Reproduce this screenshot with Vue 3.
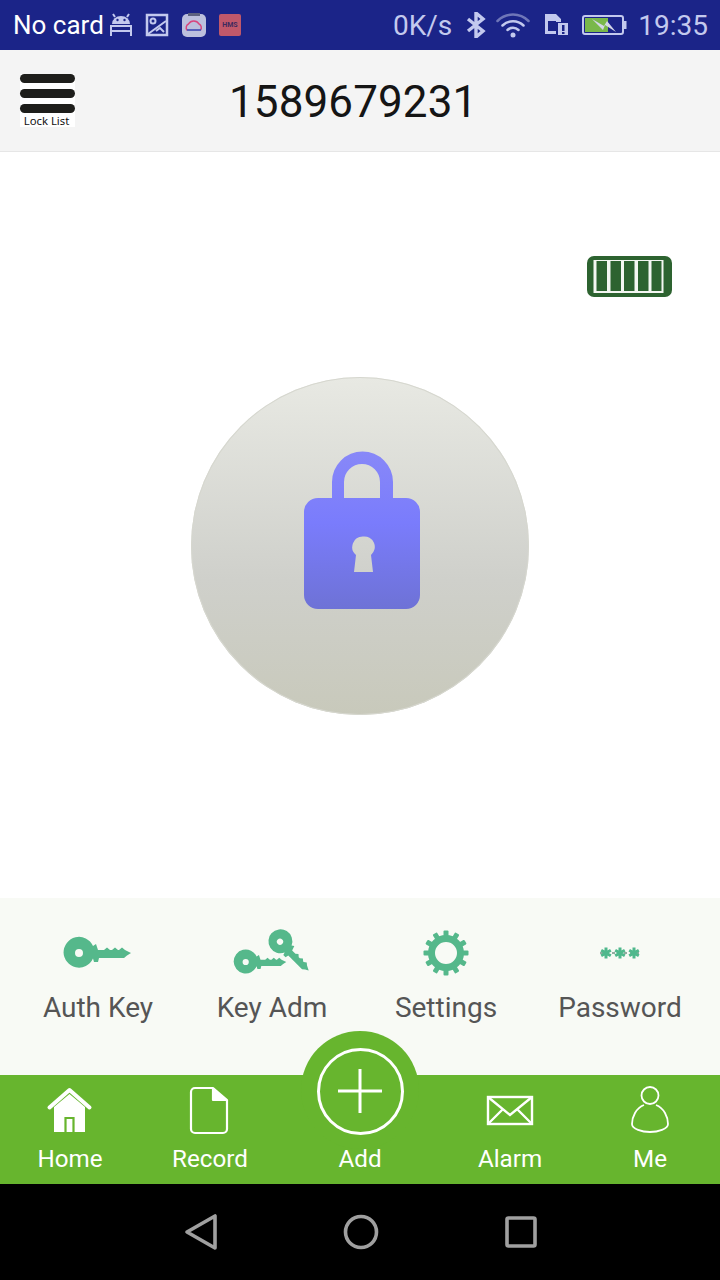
<script setup>
// key shape, head centred on 0,0 with the blade pointing right
const keyPath = 'M-15.5 0a15.5 16 0 0 1 29.500-7l3-2 2 6h6l3-2.500 3 2.500h2l3-2.500 3 2.500h1l3-2.500 3 2.500 6 3-4 2.500-3 2.500H20l-1 4h-4l-1-3.500a15.500 16 0 0 1-29.500-6.500zM-4 0a4 4 0 1 0 8 0a4 4 0 1 0-8 0z'

const gearTeeth = Array.from({ length: 12 }, (_, i) => i * 30)

const actions = ['Auth Key', 'Key Adm', 'Settings', 'Password']
</script>

<template>
  <div class="phone">
    <!-- status bar -->
    <div class="status">
      <div class="status-left">
        <span class="carrier">No card</span>
        <svg class="s-android" width="26" height="26" viewBox="0 0 26 26" fill="none" stroke="#c3c9ee" stroke-width="2">
          <path d="M4 12a9 8 0 0 1 18 0z" fill="#c3c9ee" stroke="none" />
          <circle cx="9.500" cy="8" r="1.200" fill="#1b2488" stroke="none" />
          <circle cx="16.500" cy="8" r="1.200" fill="#1b2488" stroke="none" />
          <path d="M7 5 5 2M19 5l2-3M2 14h22M3 14v10M23 14v10M3 19h20" />
        </svg>
        <svg class="s-image" width="24" height="24" viewBox="0 0 24 24" fill="none" stroke="#c3c9ee" stroke-width="2.500">
          <rect x="2" y="2" width="20" height="20" />
          <circle cx="8" cy="8" r="2.500" stroke-width="2" />
          <path d="M3 21 21 8M11 18l4-3 4 4" stroke-width="2" />
        </svg>
        <svg class="s-cloud" width="24" height="24" viewBox="0 0 24 24" fill="none">
          <rect y="1" width="24" height="23" rx="5" fill="#bcc0dd" />
          <path d="M6 0h12v3H6z" fill="#5d6280" />
          <path d="M5 17a4 4 0 0 1 1.500-6 6 6 0 0 1 10.500 0 4 4 0 0 1 1.500 6z" stroke="#d8457e" stroke-width="1.500" />
          <path d="M5 17h14" stroke="#2e5fc8" stroke-width="1.500" />
        </svg>
        <div class="s-hms">HMS</div>
      </div>
      <div class="status-right">
        <span class="speed">0K/s</span>
        <svg width="20" height="26" viewBox="0 0 20 26" fill="none" stroke="#c3c9ee" stroke-width="3.400">
          <path d="M2 7 17 19l-7 6V1l7 6L2 19" />
        </svg>
        <svg width="34" height="26" viewBox="0 0 34 26" fill="none" stroke-linecap="round">
          <path d="M1.500 9a22 22 0 0 1 31 0" stroke="#6f76b8" stroke-width="2.500" />
          <path d="M6.500 13.500a15 15 0 0 1 21 0" stroke="#c3c9ee" stroke-width="2.500" />
          <path d="M11.500 18a8 8 0 0 1 11 0" stroke="#c3c9ee" stroke-width="2.500" />
          <circle cx="17" cy="23" r="2.500" fill="#c3c9ee" />
        </svg>
        <svg class="s-sim" width="26" height="26" viewBox="0 0 26 26">
          <path d="M1 2h11l5 5v3h-5v12H1z" fill="#c3c9ee" />
          <path d="M4 9h8v10H4z" fill="#1b2488" />
          <path d="M14 11h10v12H14z" fill="#c3c9ee" />
          <path d="M18 13h2.500v6H18zM18 20h2.500v2H18z" fill="#1b2488" />
        </svg>
        <svg width="46" height="24" viewBox="0 0 46 24">
          <rect x="2" y="3" width="40" height="18" rx="2" fill="none" stroke="#c3c9ee" stroke-width="2" />
          <rect x="43" y="8" width="2.500" height="8" fill="#c3c9ee" />
          <rect x="4" y="5" width="23" height="14" fill="#79b84a" />
          <path d="M11 6 23 13l3-5 9 11-11-7-2 5z" fill="#d3d6e8" />
        </svg>
        <span class="clock">19:35</span>
      </div>
    </div>

    <!-- title bar -->
    <header class="topbar">
      <div class="lock-list">
        <i></i><i></i><i></i>
        <span>Lock List</span>
      </div>
      <h1>1589679231</h1>
    </header>

    <main class="main">
      <svg class="battery" width="85" height="41" viewBox="0 0 85 41">
        <rect width="85" height="41" rx="7" fill="#2d6330" />
        <rect x="6.500" y="4" width="70" height="33" fill="#f4f7f2" />
        <rect x="9.500" y="5" width="10.500" height="30" fill="#2d6330" />
        <rect x="23.500" y="5" width="10.500" height="30" fill="#2d6330" />
        <rect x="37" y="5" width="10.500" height="30" fill="#2d6330" />
        <rect x="51" y="5" width="10.500" height="30" fill="#2d6330" />
        <rect x="64.500" y="5" width="10" height="30" fill="#2d6330" />
      </svg>

      <button class="lock-btn">
        <svg width="338" height="338" viewBox="0 0 338 338">
          <defs>
            <linearGradient id="lockFill" x1="0" y1="0" x2="0" y2="1">
              <stop offset="0" stop-color="#8888f8" />
              <stop offset="0.45" stop-color="#7a7cfc" />
              <stop offset="1" stop-color="#6e72d6" />
            </linearGradient>
          </defs>
          <path
            fill="url(#lockFill)"
            fill-rule="evenodd"
            d="M141 121V105a30.500 30.500 0 0 1 61 0v16h13a14 14 0 0 1 14 14v83a14 14 0 0 1-14 14H127a14 14 0 0 1-14-14V135a14 14 0 0 1 14-14zM153 121h36V105a18 18 0 0 0-36 0zM172 159.500a10.500 10.500 0 0 0-7 18.500l-2 17h19l-2-17a10.500 10.500 0 0 0-8-18.500z"
          />
        </svg>
      </button>
    </main>

    <!-- quick actions -->
    <section class="actions">
      <div v-for="(name, index) in actions" :key="name" class="action">
        <svg width="110" height="56" viewBox="0 0 110 56" class="action-icon">
          <g v-if="index === 0" fill="#55b88b">
            <path :d="keyPath" fill-rule="evenodd" transform="translate(36 28)" />
          </g>
          <g v-else-if="index === 1" fill="#55b88b">
            <path :d="keyPath" fill-rule="evenodd" transform="translate(28.700 37) scale(.78)" />
            <path :d="keyPath" fill-rule="evenodd" transform="translate(63 16.700) rotate(45) scale(.78)" />
          </g>
          <g v-else-if="index === 2" fill="#55b88b">
            <circle cx="55" cy="28" r="14.500" fill="none" stroke="#55b88b" stroke-width="7" />
            <rect
              v-for="deg in gearTeeth"
              :key="deg"
              x="52.500"
              y="5.500"
              width="5"
              height="6"
              rx="1"
              :transform="`rotate(${deg} 55 28)`"
            />
          </g>
          <g v-else fill="none">
            <path d="M35 28h40" stroke="#2e5d4c" stroke-width="1" stroke-dasharray="3 3" />
            <g stroke="#4fb88c" stroke-width="3">
              <path d="M41 22.500v11M36.200 25.200l9.600 5.600M45.800 25.200l-9.600 5.600" />
              <path d="M55 22.500v11M50.200 25.200l9.600 5.600M59.800 25.200l-9.600 5.600" />
              <path d="M69 22.500v11M64.200 25.200l9.600 5.600M73.800 25.200l-9.600 5.600" />
            </g>
          </g>
        </svg>
        <span>{{ name }}</span>
      </div>
    </section>

    <!-- bottom tabs -->
    <nav class="tabs">
      <div class="tab">
        <svg width="50" height="50" viewBox="0 0 50 50">
          <path d="M4.500 22.500 24.500 5l20 17.500" fill="none" stroke="#fff" stroke-width="4" stroke-linejoin="round" stroke-linecap="round" />
          <path d="M9 22 24.500 9 40 22v25H9z" fill="#fff" />
          <path d="M20.500 47V33h8v14" fill="#fff" stroke="#67b52e" stroke-width="2.200" />
        </svg>
        <span>Home</span>
      </div>
      <div class="tab">
        <svg width="50" height="50" viewBox="0 0 50 50" fill="none" stroke="#fff" stroke-width="2.200">
          <path d="M28 3H10a4 4 0 0 0-4 4v37a4 4 0 0 0 4 4h28a4 4 0 0 0 4-4V15" />
          <path d="M28 3 42 15H28z" fill="#fff" stroke-linejoin="round" />
        </svg>
        <span>Record</span>
      </div>
      <div class="tab tab-add">
        <div class="hump">
          <div class="ring">
            <svg width="46" height="46" viewBox="0 0 46 46" stroke="#fff" stroke-width="3">
              <path d="M1 23h44M23 1v44" />
            </svg>
          </div>
        </div>
        <span>Add</span>
      </div>
      <div class="tab">
        <svg width="50" height="50" viewBox="0 0 50 50" fill="none" stroke="#fff" stroke-width="2.400">
          <rect x="3" y="12" width="44" height="27" />
          <path d="M3 12 25 30l22-18M3 39l15-15M47 39 32 24" />
        </svg>
        <span>Alarm</span>
      </div>
      <div class="tab">
        <svg width="50" height="50" viewBox="0 0 50 50" fill="none" stroke="#fff" stroke-width="1.800">
          <circle cx="25" cy="10.500" r="8.500" />
          <path d="M19 20C11 23 7 32 7 39c0 5 10 8 18 8s18-3 18-8c0-7-4-16-12-19" />
        </svg>
        <span>Me</span>
      </div>
    </nav>

    <!-- android nav keys -->
    <div class="keys">
      <svg width="160" height="44" viewBox="0 0 160 44" fill="none" stroke="#a0a0a0" stroke-width="3.600" stroke-linejoin="round">
        <path d="M95 6v32L67 22z" />
      </svg>
      <svg width="160" height="44" viewBox="0 0 160 44" fill="none" stroke="#a0a0a0" stroke-width="3.600">
        <circle cx="81" cy="22" r="15.500" />
      </svg>
      <svg width="160" height="44" viewBox="0 0 160 44" fill="none" stroke="#a0a0a0" stroke-width="3.600" stroke-linejoin="round">
        <rect x="67" y="8" width="28" height="28" rx="1.500" />
      </svg>
    </div>
  </div>
</template>

<style scoped>
.phone {
  width: 720px;
  height: 1280px;
  display: flex;
  flex-direction: column;
  font-family: Roboto, "Liberation Sans", sans-serif;
  overflow: hidden;
}

.status {
  height: 50px;
  flex: none;
  background: #1b2488;
  display: flex;
  justify-content: space-between;
  align-items: center;
  padding: 0 12px 0 13px;
  box-sizing: border-box;
  font-size: 26px;
}

.status-left,
.status-right {
  display: flex;
  align-items: center;
}

.carrier {
  color: #fff;
  width: 95px;
}

.s-android {
  margin-right: 11px;
}

.s-image {
  margin-right: 13px;
}

.s-cloud {
  margin-right: 13px;
}

.s-hms {
  width: 22px;
  height: 22px;
  border-radius: 2px;
  background: #c0586a;
  color: #3d2a5e;
  font-size: 7px;
  font-weight: 700;
  line-height: 22px;
  text-align: center;
}

.status-right {
  gap: 10px;
  color: #c3c9ee;
  font-size: 28px;
}

.speed {
  margin-right: 4px;
}

.s-sim {
  margin: 0 1px 0 4px;
}

.clock {
  margin-left: 1px;
}

.topbar {
  height: 102px;
  flex: none;
  background: #f4f4f4;
  border-bottom: 1px solid #e6e6e6;
  box-sizing: border-box;
  display: flex;
  align-items: center;
  padding-left: 20px;
}

.lock-list {
  width: 55px;
  height: 53px;
  background: #fff;
  display: flex;
  flex-direction: column;
  align-items: stretch;
  gap: 6px;
}

.lock-list i {
  display: block;
  height: 9px;
  background: #1e1e1b;
  border-radius: 5px;
}

.lock-list span {
  font-family: "Noto Sans", sans-serif;
  font-size: 11.300px;
  line-height: 13px;
  color: #111;
  text-align: center;
  margin: -5px 0 0 -2px;
  white-space: nowrap;
}

.topbar h1 {
  margin: 2px 0 0 154px;
  font-size: 44px;
  font-weight: 400;
  color: #151515;
  line-height: 1;
  letter-spacing: 0.100px;
}

.main {
  flex: 1;
  background: #fff;
  display: flex;
  flex-direction: column;
  align-items: center;
}

.battery {
  align-self: flex-end;
  margin: 104px 48px 80px 0;
}

.lock-btn {
  width: 338px;
  height: 338px;
  padding: 0;
  border: 0;
  border-radius: 50%;
  background: linear-gradient(#e8e9e3, #cfd0cb 60%, #c8c9bb);
  box-shadow: inset 0 0 0 1px #d6d7cf;
  display: flex;
}

.actions {
  height: 177px;
  flex: none;
  background: #f8faf5;
  display: grid;
  grid-template-columns: repeat(4, 174px);
  padding-left: 11px;
  box-sizing: border-box;
}

.action {
  display: flex;
  flex-direction: column;
  align-items: center;
  padding-top: 27px;
  font-size: 28px;
  color: #555;
}

.action-icon {
  margin-bottom: 10px;
}

.tabs {
  height: 109px;
  flex: none;
  background: #67b52e;
  display: grid;
  grid-template-columns: 140px 140px 160px 140px 140px;
  color: #fff;
  font-size: 24.200px;
}

.tab {
  display: flex;
  flex-direction: column;
  align-items: center;
  padding-top: 10px;
  position: relative;
}

.tab span {
  line-height: 28px;
  margin-top: 10px;
}

.tab-add {
  justify-content: flex-end;
  padding-bottom: 11px;
}

.hump {
  position: absolute;
  left: 21px;
  top: -44px;
  width: 118px;
  height: 118px;
  border-radius: 50%;
  background: #67b52e;
  display: flex;
  align-items: center;
  justify-content: center;
}

.ring {
  width: 87px;
  height: 87px;
  box-sizing: border-box;
  border: 3.500px solid #fff;
  border-radius: 50%;
  display: flex;
  align-items: center;
  justify-content: center;
  margin-top: 2px;
}

.tab-add span {
  position: relative;
}

.keys {
  height: 96px;
  flex: none;
  background: #000;
  display: flex;
  justify-content: center;
  padding-top: 26px;
  box-sizing: border-box;
}
</style>

<style>
body {
  margin: 0;
}
</style>
